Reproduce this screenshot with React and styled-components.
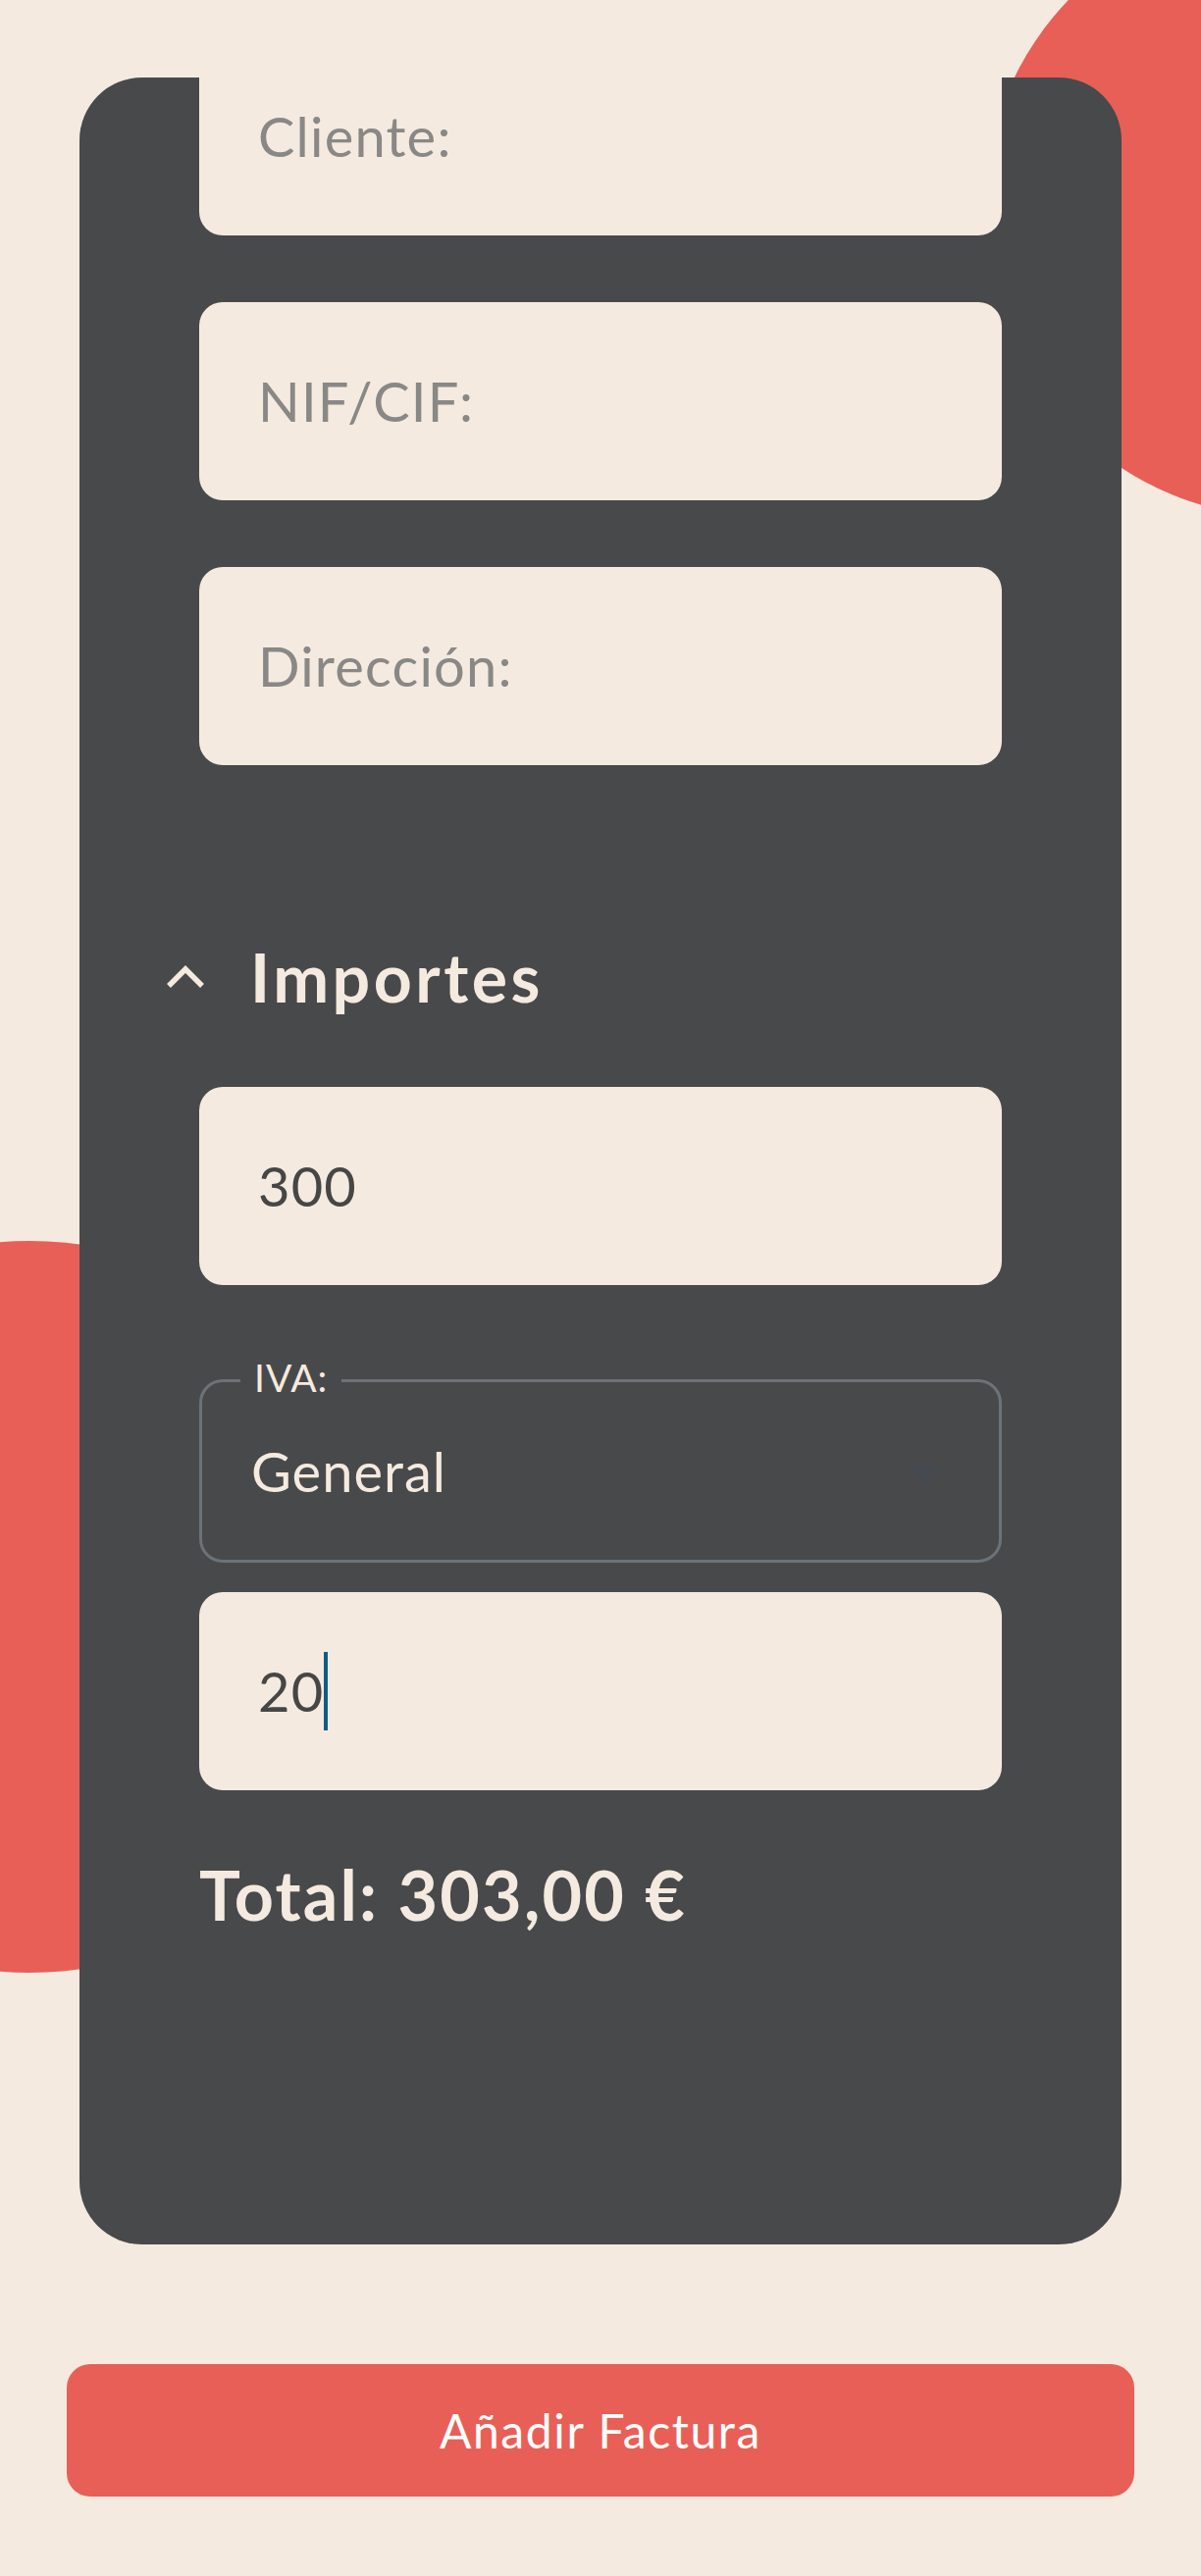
import React from "react";
import styled, { createGlobalStyle } from "styled-components";

const GlobalStyle = createGlobalStyle`
  body {
    margin: 0;
    background: #F5EADF;
    font-family: "Lato", "Open Sans", sans-serif;
  }
`;

const Page = styled.div`
  position: relative;
  height: 2626px;
  overflow: hidden;
  padding-top: 79px;
  box-sizing: border-box;
`;

const Blob = styled.div`
  position: absolute;
  border-radius: 50%;
  background: #E85F57;
  left: ${(p) => p.x}px;
  top: ${(p) => p.y}px;
  width: ${(p) => p.size}px;
  height: ${(p) => p.size}px;
`;

const Card = styled.section`
  position: relative;
  margin-left: 81px;
  width: 1062px;
  height: 2209px;
  box-sizing: border-box;
  padding: 0 122px;
  background: #48494B;
  border-radius: 64px;
  overflow: hidden;
  display: flex;
  flex-direction: column;
`;

const FieldStack = styled.div`
  display: flex;
  flex-direction: column;
  gap: 68px;
  margin-top: -41px;
`;

const Field = styled.div`
  height: 202px;
  flex-shrink: 0;
  box-sizing: border-box;
  padding-left: 60px;
  background: #F5EADF;
  border-radius: 24px;
  display: flex;
  align-items: center;
  font-size: 56px;
  line-height: 1;
  letter-spacing: 1.2px;
  color: ${(p) => (p.$placeholder ? "#8A8886" : "#464646")};
  margin-top: ${(p) => p.$mt || 0}px;
`;

const Caret = styled.span`
  display: inline-block;
  width: 4px;
  height: 80px;
  background: #0E5D85;
`;

const SectionHeader = styled.div`
  height: 100px;
  margin: 166px 0 0 -34px;
  display: flex;
  align-items: center;
  gap: 46px;
`;

const SectionTitle = styled.h2`
  margin: 0;
  font-size: 68px;
  line-height: 1;
  font-weight: 700;
  letter-spacing: 3.5px;
  color: #F5EADF;
`;

const SelectBox = styled.div`
  position: relative;
  margin-top: 96px;
  height: 187px;
  box-sizing: border-box;
  border: 3px solid #6B7378;
  border-radius: 24px;
  padding-left: 50px;
  display: flex;
  align-items: center;
  font-size: 56px;
  line-height: 1;
  letter-spacing: 1px;
  color: #F5EADF;
`;

const SelectLabel = styled.span`
  position: absolute;
  top: -24px;
  left: 39px;
  padding: 0 14px;
  background: #48494B;
  font-size: 39px;
  line-height: 1;
  letter-spacing: 1px;
  color: #F5EADF;
`;

const SelectArrow = styled.svg`
  position: absolute;
  right: 58px;
  top: 85px;
`;

const Total = styled.div`
  margin-top: 71px;
  font-size: 70px;
  line-height: 1;
  font-weight: 700;
  letter-spacing: 2.2px;
  color: #F5EADF;
`;

const SubmitButton = styled.button`
  display: flex;
  align-items: center;
  justify-content: center;
  margin: 122px 0 0 68px;
  width: 1088px;
  height: 135px;
  border: none;
  border-radius: 24px;
  background: #E85F57;
  color: #FFFFFF;
  font-family: inherit;
  font-size: 48px;
  font-weight: 400;
  letter-spacing: 1.6px;
`;

function Chevron() {
  return (
    <svg width="40" height="26" viewBox="0 0 40 26">
      <polyline points="3,22 20,5 37,22" fill="none" stroke="#F5EADF" strokeWidth="5.5" />
    </svg>
  );
}

export default function App() {
  return (
    <>
      <GlobalStyle />
      <Page>
        <Blob x={1002} y={-96} size={624} />
        <Blob x={-343} y={1265} size={746} />
        <Card>
          <FieldStack>
            <Field $placeholder>Cliente:</Field>
            <Field $placeholder>NIF/CIF:</Field>
            <Field $placeholder>Dirección:</Field>
          </FieldStack>

          <SectionHeader>
            <Chevron />
            <SectionTitle>Importes</SectionTitle>
          </SectionHeader>

          <Field $mt={62}>300</Field>

          <SelectBox>
            <SelectLabel>IVA:</SelectLabel>
            General
            <SelectArrow width="34" height="17" viewBox="0 0 34 17">
              <polygon points="0,0 34,0 17,17" fill="#454A51" />
            </SelectArrow>
          </SelectBox>

          <Field $mt={30}>
            20
            <Caret />
          </Field>

          <Total>Total: 303,00 €</Total>
        </Card>
        <SubmitButton>Añadir Factura</SubmitButton>
      </Page>
    </>
  );
}
